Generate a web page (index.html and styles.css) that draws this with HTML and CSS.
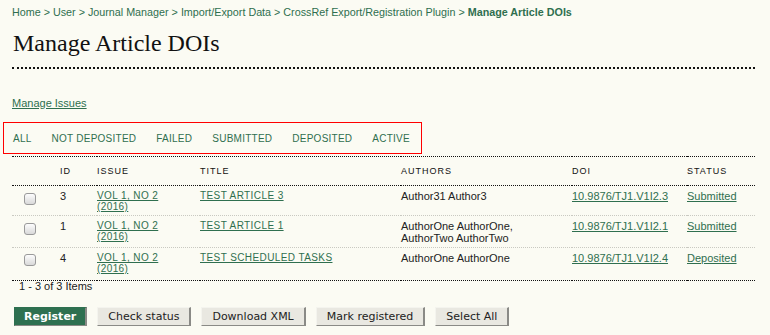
FILE: index.html
```html
<!DOCTYPE html>
<html>
<head>
<meta charset="utf-8">
<link rel="stylesheet" href="styles.css">
</head>
<body>
<div class="page">
  <div class="breadcrumb">
    <a href="#">Home</a> &gt; <a href="#">User</a> &gt; <a href="#">Journal Manager</a> &gt; <a href="#">Import/Export Data</a> &gt; <a href="#">CrossRef Export/Registration Plugin</a> &gt; <a href="#" class="current">Manage Article DOIs</a>
  </div>
  <h2 class="title">Manage Article DOIs</h2>
  <div class="separator"></div>
  <div class="manage-issues"><a href="#">Manage Issues</a></div>
  <ul class="tabs">
    <li><a href="#">All</a></li>
    <li><a href="#">Not Deposited</a></li>
    <li><a href="#">Failed</a></li>
    <li><a href="#">Submitted</a></li>
    <li><a href="#">Deposited</a></li>
    <li><a href="#">Active</a></li>
  </ul>
  <table class="grid">
    <colgroup>
      <col class="c-check"><col class="c-id"><col class="c-issue"><col class="c-title"><col class="c-authors"><col class="c-doi"><col class="c-status">
    </colgroup>
    <thead>
      <tr><th></th><th>ID</th><th>Issue</th><th>Title</th><th>Authors</th><th>DOI</th><th>Status</th></tr>
    </thead>
    <tbody>
      <tr>
        <td class="check"><input type="checkbox" class="cb"></td>
        <td class="num">3</td>
        <td class="caps"><a href="#">Vol 1, No 2 (2016)</a></td>
        <td class="caps"><a href="#">Test Article 3</a></td>
        <td class="plain">Author31 Author3</td>
        <td class="plain"><a href="#">10.9876/TJ1.V1I2.3</a></td>
        <td class="plain"><a href="#">Submitted</a></td>
      </tr>
      <tr>
        <td class="check"><input type="checkbox" class="cb"></td>
        <td class="num">1</td>
        <td class="caps"><a href="#">Vol 1, No 2 (2016)</a></td>
        <td class="caps"><a href="#">Test Article 1</a></td>
        <td class="plain">AuthorOne AuthorOne, AuthorTwo AuthorTwo</td>
        <td class="plain"><a href="#">10.9876/TJ1.V1I2.1</a></td>
        <td class="plain"><a href="#">Submitted</a></td>
      </tr>
      <tr class="last">
        <td class="check"><input type="checkbox" class="cb"></td>
        <td class="num">4</td>
        <td class="caps"><a href="#">Vol 1, No 2 (2016)</a></td>
        <td class="caps"><a href="#">Test Scheduled Tasks</a></td>
        <td class="plain">AuthorOne AuthorOne</td>
        <td class="plain"><a href="#">10.9876/TJ1.V1I2.4</a></td>
        <td class="plain"><a href="#">Deposited</a></td>
      </tr>
    </tbody>
  </table>
  <div class="count">1 - 3 of 3 Items</div>
  <div class="actions">
    <button class="btn primary">Register</button>
    <button class="btn">Check status</button>
    <button class="btn">Download XML</button>
    <button class="btn">Mark registered</button>
    <button class="btn">Select All</button>
  </div>
</div>
</body>
</html>
```

FILE: styles.css
```css
html, body {
  margin: 0;
  padding: 0;
  background: #fbfbf3;
}
body {
  font-family: "Liberation Sans", Arial, sans-serif;
  color: #222;
}
a {
  color: #2f6f4f;
}
.page {
  padding: 6px 15px 0 12px;
}
.breadcrumb {
  font-size: 10.75px;
  line-height: 13px;
  color: #2f6f4f;
}
.breadcrumb a {
  text-decoration: none;
}
.breadcrumb .current {
  font-weight: bold;
}
.title {
  font-family: "Liberation Serif", "Times New Roman", serif;
  font-weight: normal;
  font-size: 24px;
  line-height: 28px;
  margin: 10px 0 10px 1px;
  color: #111;
}
.separator {
  border-top: 2px dotted #111;
}
.manage-issues {
  margin-top: 28px;
  font-size: 11px;
  line-height: 13px;
}
.tabs {
  list-style: none;
  margin: 12px 0 0 -9px;
  padding: 10px 0 9px 9px;
  width: 408px;
  border: 1px solid #f00;
  display: flex;
  gap: 20px;
  font-size: 10px;
  line-height: 11px;
  letter-spacing: 0.25px;
  text-transform: uppercase;
  font-weight: normal;
}
.tabs li {
  flex-shrink: 0;
  white-space: nowrap;
}
.tabs a {
  text-decoration: none;
}
.grid {
  margin-top: 2px;
  width: 743px;
  table-layout: fixed;
  border-collapse: collapse;
  border-top: 1px dotted #111;
  border-bottom: 1px dotted #111;
}
.c-check { width: 48px; }
.c-id { width: 37px; }
.c-issue { width: 103px; }
.c-title { width: 201px; }
.c-authors { width: 171px; }
.c-doi { width: 115px; }
.c-status { width: 68px; }
.grid th {
  text-align: left;
  font-weight: normal;
  font-size: 9px;
  line-height: 12px;
  letter-spacing: 1px;
  text-transform: uppercase;
  padding: 8px 0 8px 0;
  border-bottom: 1px dotted #111;
  color: #111;
}
.grid td {
  vertical-align: top;
  padding: 4px 10px 3px 0;
  border-bottom: 1px dotted #c9c9c1;
}
.grid tr.last td {
  padding-bottom: 6px;
  border-bottom: none;
}
.grid td.check {
  padding-top: 7px;
  padding-left: 12px;
}
.grid tr.last td.check {
  padding-top: 6px;
}
.cb {
  appearance: none;
  -webkit-appearance: none;
  display: block;
  margin: 0;
  width: 12px;
  height: 12px;
  border: 1px solid #9a9a9a;
  border-radius: 3px;
  background: linear-gradient(#fdfdfd, #d9d9d9);
  box-sizing: border-box;
}
.grid td.num {
  font-size: 11px;
  line-height: 12px;
}
.grid td.caps {
  font-size: 10px;
  line-height: 11px;
  letter-spacing: 0.4px;
  text-transform: uppercase;
}
.grid td.plain {
  font-size: 11px;
  line-height: 12px;
}
.count {
  font-size: 11px;
  line-height: 11px;
  padding: 0 0 0 7px;
  color: #222;
}
.actions {
  margin-top: 15px;
  margin-left: 2px;
  display: flex;
  gap: 10px;
}
.btn {
  font-family: "DejaVu Sans", Verdana, sans-serif;
  font-size: 11px;
  line-height: 13px;
  height: 19px;
  padding: 2px 10px;
  margin: 0;
  background: #e9e8e1;
  color: #222;
  border: 1px solid;
  border-right-width: 2px;
  border-color: #f4f4ee #8a8a86 #8a8a86 #f4f4ee;
  border-radius: 0;
  box-sizing: border-box;
}
.btn.primary {
  padding: 2px 9px;
  background: #2e7050;
  color: #fff;
  font-weight: bold;
  border-color: #2e7050 #8a8a86 #8a8a86 #2e7050;
}
```
